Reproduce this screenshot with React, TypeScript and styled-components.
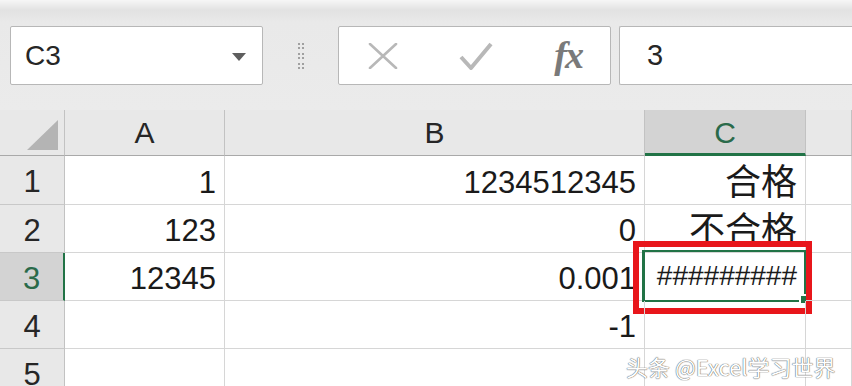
import React from "react";
import styled, { createGlobalStyle } from "styled-components";

const Global = createGlobalStyle`
  html, body { margin: 0; padding: 0; background: #ffffff; overflow: hidden; }
  #root { width: 852px; height: 386px; }
`;

const Page = styled.div`
  position: relative;
  width: 852px;
  height: 386px;
  overflow: hidden;
  font-family: "Liberation Sans", Arial, sans-serif;
  background: #ffffff;
`;

const Toolbar = styled.div`
  height: 110px;
  box-sizing: border-box;
  padding: 26px 0 0 10px;
  display: flex;
  align-items: flex-start;
  background: linear-gradient(#f6f6f6 0px, #e2e2e2 10px, #e9e9e9 22px, #ebebeb 110px);
`;

const Box = styled.div<{ $w?: number }>`
  box-sizing: border-box;
  height: 59px;
  width: ${(p) => (p.$w ? `${p.$w}px` : "auto")};
  flex: ${(p) => (p.$w ? "none" : "1")};
  background: #ffffff;
  border: 1px solid #b7b7b7;
  border-radius: 2px;
  display: flex;
  align-items: center;
`;

const NameBox = styled(Box)`
  padding: 0 16px 0 14px;
  justify-content: space-between;
`;

const NameText = styled.span`
  font-size: 28px;
  color: #262626;
`;

const Caret = styled.span`
  width: 0;
  height: 0;
  border-left: 7px solid transparent;
  border-right: 7px solid transparent;
  border-top: 8px solid #5e5e5e;
  margin-top: 2px;
`;

const Grip = styled.div`
  width: 75px;
  height: 59px;
  display: flex;
  align-items: center;
  justify-content: center;
`;

const ButtonsBox = styled(Box)`
  padding: 0 28px 0 29px;
  justify-content: space-between;
  margin-right: 8px;
`;

const FxText = styled.span`
  font-family: "Liberation Serif", "Times New Roman", serif;
  font-style: italic;
  font-weight: bold;
  font-size: 38px;
  color: #7a7a7a;
  letter-spacing: -2px;
  margin-top: -2px;
`;

const FormulaBox = styled(Box)`
  padding-left: 27px;
  border-right: none;
  border-radius: 2px 0 0 2px;
`;

const FormulaText = styled.span`
  font-size: 29px;
  color: #262626;
`;

const Sheet = styled.div`
  display: grid;
  grid-template-columns: 65px 160px 420px 161px 1fr;
  grid-template-rows: 46px 49px 48px 48px 48px 48px;
  background: #ffffff;
`;

const Corner = styled.div`
  background: #e8e8e8;
  border-right: 1px solid #c2c2c2;
  border-bottom: 1px solid #a9a9a9;
  box-sizing: border-box;
  display: flex;
  align-items: flex-end;
  justify-content: flex-end;
  padding: 0 6px 5px 0;
`;

const ColHeader = styled.div<{ $sel?: boolean }>`
  box-sizing: border-box;
  background: ${(p) => (p.$sel ? "#d3d3d3" : "#e8e8e8")};
  border-right: 1px solid #c2c2c2;
  border-bottom: ${(p) => (p.$sel ? "3px solid #217346" : "1px solid #a9a9a9")};
  display: flex;
  align-items: center;
  justify-content: center;
  padding-top: ${(p) => (p.$sel ? "2px" : "0")};
  font-size: 30px;
  color: ${(p) => (p.$sel ? "#2a6a4a" : "#262626")};
`;

const RowHeader = styled.div<{ $sel?: boolean }>`
  box-sizing: border-box;
  background: ${(p) => (p.$sel ? "#d3d3d3" : "#e8e8e8")};
  border-right: ${(p) => (p.$sel ? "2px solid #217346" : "1px solid #c2c2c2")};
  border-bottom: 1px solid #c8c8c8;
  display: flex;
  align-items: center;
  justify-content: center;
  padding-top: 4px;
  font-size: 31px;
  color: ${(p) => (p.$sel ? "#2a6a4a" : "#262626")};
`;

const Cell = styled.div<{ $kind?: "num" | "cjk" | "hash" }>`
  position: relative;
  box-sizing: border-box;
  border-right: 1px solid #d6d6d6;
  border-bottom: 1px solid #d6d6d6;
  display: flex;
  align-items: flex-end;
  justify-content: flex-end;
  padding-right: 8px;
  white-space: nowrap;
  color: #1a1a1a;
  line-height: 1;
  font-family: ${(p) =>
    p.$kind === "cjk"
      ? `"Noto Sans CJK SC", "Microsoft YaHei", sans-serif`
      : `"Liberation Sans", Arial, sans-serif`};
  font-size: ${(p) => (p.$kind === "cjk" ? "36px" : p.$kind === "hash" ? "28px" : "31px")};
  padding-bottom: ${(p) => (p.$kind === "cjk" ? "7px" : p.$kind === "hash" ? "10px" : "6px")};
`;

const Selection = styled.div`
  position: absolute;
  left: -3px;
  top: -3px;
  right: -1px;
  bottom: -2px;
  border: 2px solid #217346;
  border-left-width: 3px;
  pointer-events: none;
`;

const FillHandle = styled.div`
  position: absolute;
  right: -3px;
  bottom: -3px;
  width: 7px;
  height: 7px;
  background: #217346;
  border-left: 2px solid #ffffff;
  border-top: 2px solid #ffffff;
`;

const Annotation = styled.div`
  position: absolute;
  left: -12px;
  top: -12px;
  right: -7px;
  bottom: -14px;
  border: 6px solid #e8161b;
  pointer-events: none;
`;

const Watermark = styled.div`
  position: absolute;
  left: 626px;
  top: 351px;
  font-family: "Noto Sans CJK SC", "Liberation Sans", sans-serif;
  font-size: 22px;
  line-height: 30px;
  color: #ffffff;
  white-space: nowrap;
  text-shadow: 0 0 1px #555555, 0 0 1px #555555;
`;

const XIcon = () => (
  <svg width="30" height="26" viewBox="0 0 30 26">
    <path d="M2 1 L28 25 M28 1 L2 25" stroke="#b8b8b8" strokeWidth="2.6" fill="none" strokeLinecap="round" />
  </svg>
);

const CheckIcon = () => (
  <svg width="34" height="28" viewBox="0 0 34 28">
    <path d="M2 15 L12 26 L32 2" stroke="#b8b8b8" strokeWidth="4" fill="none" strokeLinejoin="round" />
  </svg>
);

const GripIcon = () => (
  <svg width="8" height="28" viewBox="0 0 8 28">
    {[0, 10, 20].map((y) => (
      <g key={y} fill="#a0a0a0">
        <rect x="1" y={y + 1} width="2" height="2" />
        <rect x="5" y={y + 1} width="2" height="2" />
        <rect x="1" y={y + 5} width="2" height="2" />
        <rect x="5" y={y + 5} width="2" height="2" />
      </g>
    ))}
  </svg>
);

const SelectAll = () => (
  <svg width="31" height="30" viewBox="0 0 31 30">
    <polygon points="31,0 31,30 0,30" fill="#b4b4b4" />
  </svg>
);

type Row = { a: string; b: string; c: string; ck: "num" | "cjk" | "hash" };

const rows: Row[] = [
  { a: "1", b: "1234512345", c: "合格", ck: "cjk" },
  { a: "123", b: "0", c: "不合格", ck: "cjk" },
  { a: "12345", b: "0.001", c: "#########", ck: "hash" },
  { a: "", b: "-1", c: "", ck: "num" },
  { a: "", b: "", c: "", ck: "num" },
];

export default function App() {
  return (
    <Page>
      <Global />
      <Toolbar>
        <NameBox $w={253}>
          <NameText>C3</NameText>
          <Caret />
        </NameBox>
        <Grip>
          <GripIcon />
        </Grip>
        <ButtonsBox $w={273}>
          <XIcon />
          <CheckIcon />
          <FxText>fx</FxText>
        </ButtonsBox>
        <FormulaBox>
          <FormulaText>3</FormulaText>
        </FormulaBox>
      </Toolbar>
      <Sheet>
        <Corner>
          <SelectAll />
        </Corner>
        <ColHeader>A</ColHeader>
        <ColHeader>B</ColHeader>
        <ColHeader $sel>C</ColHeader>
        <ColHeader />
        {rows.map((r, i) => (
          <React.Fragment key={i}>
            <RowHeader $sel={i === 2}>{i + 1}</RowHeader>
            <Cell $kind="num">{r.a}</Cell>
            <Cell $kind="num">{r.b}</Cell>
            <Cell $kind={r.ck}>
              {r.c}
              {i === 2 && (
                <>
                  <Selection />
                  <FillHandle />
                  <Annotation />
                </>
              )}
            </Cell>
            <Cell $kind="num" />
          </React.Fragment>
        ))}
      </Sheet>
      <Watermark>头条 @Excel学习世界</Watermark>
    </Page>
  );
}
